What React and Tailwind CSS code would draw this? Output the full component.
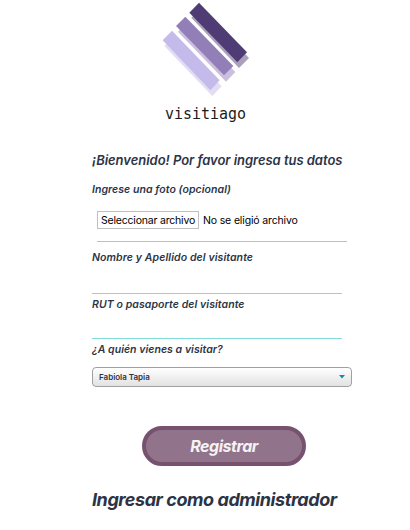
function Logo() {
  return (
    <header className="h-[148px] pl-[150px]">
      <svg width="110" height="98" viewBox="0 0 330 294" className="block" aria-hidden="true">
        <path d="M153 25 124 53 267 204 297 174Z" fill="#aaa0bb" />
        <path d="M147 8 118 38 262 187 291 157Z" fill="#503c74" />
        <path d="M112 67 84 95 228 245 256 216Z" fill="#ccbfdd" />
        <path d="M106 50 78 78 222 226 250 198Z" fill="#937fb8" />
        <path d="M72 109 43 138 187 288 215 259Z" fill="#e2dcf5" />
        <path d="M66 92 38 121 181 271 209 241Z" fill="#c5bbeb" />
      </svg>
      <p className="mt-[7px] ml-[15px] w-[90px] origin-left scale-x-[0.935] font-['DejaVu_Sans_Mono',monospace] text-[16px] leading-[18px] text-[#1c1c1c]">
        visitiago
      </p>
    </header>
  );
}

export default function App() {
  return (
    <main className="h-[530px] w-[410px] overflow-hidden bg-white font-['Inter',sans-serif] text-[#2b3445]">
      <Logo />
      <form className="flex flex-col pl-[92px] whitespace-nowrap" onSubmit={(e) => e.preventDefault()}>
        <h1 className="h-[32px] text-[13px] leading-6 font-semibold tracking-[-0.035px] italic">¡Bienvenido! Por favor ingresa tus datos</h1>
        <label className="h-[31px] pt-px text-[10.5px] leading-[18px] font-semibold tracking-[0.06px] italic">Ingrese una foto (opcional)</label>
        <div className="ml-[5px] flex h-[31px] w-[250px] border-b border-[#7fdcd7] text-[10.5px] tracking-[-0.15px] text-black">
          <button type="button" className="h-[18px] w-[102px] border border-[#c0c0c0] bg-white text-center leading-[18px] tracking-[-0.2px]">
            Seleccionar archivo
          </button>
          <span className="ml-1 leading-5">No se eligió archivo</span>
        </div>
        <label className="h-[24px] pt-[7px] text-[10.5px] leading-[18px] font-semibold tracking-[0.1px] italic">Nombre y Apellido del visitante</label>
        <input className="h-[28px] w-[250px] border-b border-[#7fdcd7] outline-none" />
        <label className="h-[24px] pt-[2px] text-[10.5px] leading-[18px] font-semibold tracking-[0.08px] italic">RUT o pasaporte del visitante</label>
        <input className="h-[21px] w-[250px] border-b border-[#7fdcd7] outline-none" />
        <label className="h-[28px] pt-[2px] text-[10.5px] leading-[18px] font-semibold tracking-[0.04px] italic">¿A quién vienes a visitar?</label>
        <button type="button" className="flex h-[20px] w-[260px] items-center justify-between rounded-[4px] border border-[#a0a0a0] bg-linear-to-b from-white to-[#e2e2e2] pr-[6px] pl-[6px] text-[8px] font-semibold">
          <span>Fabiola Tapia</span>
          <svg width="6" height="4" viewBox="0 0 6 4"><path d="M0 0h6L3 3.5Z" fill="#158bb0" /></svg>
        </button>
        <button className="mt-[39px] ml-[50px] h-[40px] w-[164px] rounded-full border-4 border-[#76526f] bg-[#91748b] text-[16px] leading-8 font-bold tracking-[-0.45px] text-[#f5f2f4] italic">
          Registrar
        </button>
        <a className="mt-[20px] text-[18px] leading-7 font-bold tracking-[-0.43px] italic">Ingresar como administrador</a>
      </form>
    </main>
  );
}
